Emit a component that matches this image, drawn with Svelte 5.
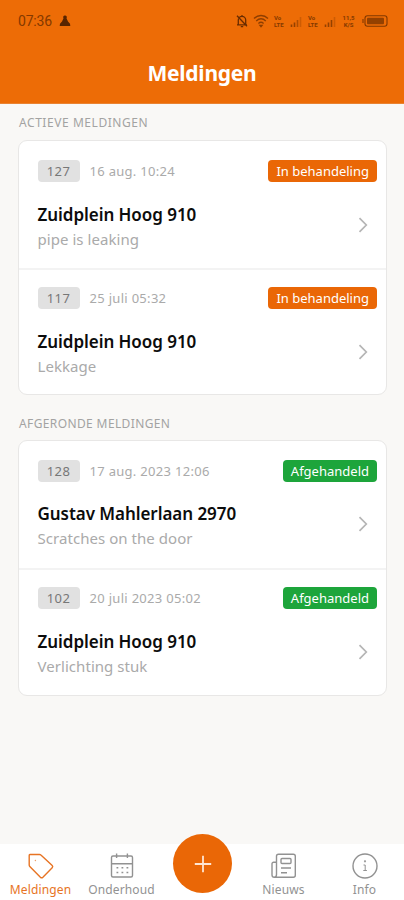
<script>
  const sections = [
    {
      title: 'ACTIEVE MELDINGEN',
      status: 'In behandeling',
      kind: 'open',
      items: [
        { id: '127', date: '16 aug. 10:24', address: 'Zuidplein Hoog 910', note: 'pipe is leaking' },
        { id: '117', date: '25 juli 05:32', address: 'Zuidplein Hoog 910', note: 'Lekkage' }
      ]
    },
    {
      title: 'AFGERONDE MELDINGEN',
      status: 'Afgehandeld',
      kind: 'done',
      items: [
        { id: '128', date: '17 aug. 2023 12:06', address: 'Gustav Mahlerlaan 2970', note: 'Scratches on the door' },
        { id: '102', date: '20 juli 2023 05:02', address: 'Zuidplein Hoog 910', note: 'Verlichting stuk' }
      ]
    }
  ];
</script>

{#snippet signal(strong)}
  <svg class="signal" width="13" height="12" viewBox="0 0 13 12">
    <path d="M1.500 12V9.500M4.500 12V7.500" />
    <path d="M7.500 12V5" opacity={strong ? 1 : 0.7} />
    <path d="M10.500 12V2" opacity="0.35" />
  </svg>
{/snippet}

<div class="screen">
  <header>
    <div class="status">
      <span class="time">07:36</span>
      <svg class="pawn" width="12" height="12" viewBox="0 0 12 12">
        <path d="M6 .5a1.700 1.700 0 0 1 1.500 2.700L9 6.500l2 2.200.3 2.300H.7L1 8.700l2-2.200 1.500-3.300A1.700 1.700 0 0 1 6 .5Z" />
      </svg>
      <div class="tray">
        <svg width="12" height="14" viewBox="0 0 12 14" class="line">
          <path d="M2.300 10.500V6a3.700 3.700 0 0 1 7.400 0v4.500M1 10.800h10M4.800 12.600h2.400M6 1v1.500M1 1.800l10 10.400" />
        </svg>
        <svg width="16" height="14" viewBox="0 0 16 14" class="line wifi">
          <path d="M1 4.500c4-4 10-4 14 0M3.200 7c3-2.800 6.600-2.800 9.600 0M5.400 9.400c1.700-1.500 3.500-1.500 5.200 0" />
          <path d="M7 11.500h2l-1 1.200Z" />
        </svg>
        <span class="tiny">Vo<br />LTE</span>
        {@render signal(false)}
        <span class="tiny">Vo<br />LTE</span>
        {@render signal(true)}
        <span class="tiny rate">11,5<br />K/S</span>
        <svg width="26" height="12" viewBox="0 0 26 12" class="battery">
          <rect x="3" y=".8" width="22" height="10.400" rx="2.500" fill="none" />
          <path d="M1 4v4" fill="none" />
          <rect class="fill" x="5" y="2.800" width="17" height="6.400" rx="1" />
        </svg>
      </div>
    </div>
    <h1>Meldingen</h1>
  </header>

  <main>
    {#each sections as section}
      <section>
        <h2 class={section.kind === 'open' ? 'wide' : ''}>{section.title}</h2>
        <div class="card">
          {#each section.items as item}
            <article>
              <div class="meta">
                <span class="id">{item.id}</span>
                <span class="date">{item.date}</span>
                <span class="tag {section.kind}">{section.status}</span>
              </div>
              <div class="body">
                <div>
                  <h3>{item.address}</h3>
                  <p>{item.note}</p>
                </div>
                <svg class="chevron" width="10" height="16" viewBox="0 0 10 16"><path d="M1.500 1.200 8.300 8l-6.800 6.800" /></svg>
              </div>
            </article>
          {/each}
        </div>
      </section>
    {/each}
  </main>

  <nav>
    <div class="tab active">
      <svg width="28" height="28" viewBox="0 0 28 28">
        <path d="M3 2.500h9.500a2 2 0 0 1 1.400.6l11.300 10.500a1.500 1.500 0 0 1 0 2.100l-9.300 9.500a1.800 1.800 0 0 1-2.500 0L2.800 14.500A2 2 0 0 1 2.200 13V3.500a1 1 0 0 1 .8-1Z" />
        <circle cx="8.300" cy="8.500" r=".3" stroke-width=".8" />
      </svg>
      <span>Meldingen</span>
    </div>
    <div class="tab">
      <svg width="28" height="28" viewBox="0 0 28 28">
        <rect x="3.500" y="4" width="21" height="21" rx="1.500" />
        <path d="M3.500 11.700h21M8.600 1.500V6M19.400 1.500V6" />
        <path stroke-dasharray="1.800 3.200" d="M8.500 15.800h12M8.500 20.500h12" />
      </svg>
      <span>Onderhoud</span>
    </div>
    <div class="tab middle">
      <div class="add">
        <svg width="18" height="18" viewBox="0 0 18 18"><path d="M9 .8v16.400M.8 9h16.400" /></svg>
      </div>
    </div>
    <div class="tab">
      <svg width="28" height="28" viewBox="0 0 28 28">
        <path d="M6.500 22.500V4.200a2 2 0 0 1 2-2h14.800a2 2 0 0 1 2 2v19a2 2 0 0 1-2 2H4.300a2.300 2.300 0 0 1-2.300-2.300V11.800a1.500 1.500 0 0 1 1.500-1.500h3M6.500 22.500c0 1.600-1 2.700-2.300 2.700" />
        <rect x="11" y="6.500" width="10" height="5" rx="1" />
        <path d="M11 16h10M11 20.800h6" />
      </svg>
      <span>Nieuws</span>
    </div>
    <div class="tab">
      <svg width="28" height="28" viewBox="0 0 28 28">
        <circle cx="14" cy="14" r="12" />
        <path d="M12.500 13h1.700v5.500M12.300 18.500h3.600" stroke-width="1" />
        <circle cx="14" cy="9.300" r=".4" />
      </svg>
      <span>Info</span>
    </div>
  </nav>
</div>

<style>
  :global(body) { margin: 0; }
  * { box-sizing: border-box; }
  svg { display: block; flex: none; }
  h1, h2, h3, p { margin: 0; white-space: nowrap; }

  .screen {
    width: 404px;
    height: 900px;
    display: flex;
    flex-direction: column;
    background: #f9f8f6;
    font-family: 'Noto Sans', sans-serif;
    overflow: hidden;
  }
  header {
    height: 104px;
    flex: none;
    background: #ed6c06;
    border-bottom: 1px solid #e98332;
  }
  .status {
    height: 42px;
    display: flex;
    align-items: center;
    padding: 0 16px 0 18px;
    color: #843900;
  }
  .time { width: 41px; font: 14px Roboto, sans-serif; letter-spacing: -0.2px; }
  .pawn { fill: #592500; }
  .tray {
    margin-left: auto;
    display: flex;
    align-items: center;
    gap: 5px;
  }
  .line { fill: none; stroke: #692c00; stroke-width: 1.3; }
  .wifi { stroke: #8e3e00; }
  .tiny { width: 11px; font: 700 6px/7px Roboto, sans-serif; color: #843900; }
  .rate { width: 13px; margin-right: 2px; text-align: center; }
  .signal { stroke: #944100; stroke-width: 1.6; }
  .battery { stroke: #813800; stroke-width: 1.1; }
  .battery .fill { fill: #843900; opacity: 0.85; stroke: none; }
  h1 {
    height: 62px;
    color: #fff;
    text-align: center;
    font-size: 21px;
    line-height: 63px;
    font-weight: 700;
    letter-spacing: -0.25px;
  }
  main { flex: 1; padding: 0 17px 0 18px; }
  section { height: 300.5px; }
  h2 {
    height: 36px;
    padding-left: 1px;
    font-size: 12px;
    line-height: 37px;
    font-weight: 400;
    letter-spacing: 0.38px;
    color: #a3a3a2;
  }
  .wide { letter-spacing: 0.56px; }
  .card {
    height: 255px;
    background: #fff;
    border: 1.500px solid #e8e7e6;
    border-radius: 9px;
  }
  section + section h2 { height: 35.5px; }
  section + section .card { height: 255.5px; }
  article { height: 126.500px; padding: 19px 9px 0 18.500px; }
  section + section article:first-child { padding-top: 18.500px; }
  article + article { border-top: 2px solid #f3f3f3; padding-top: 17.500px; }
  .meta { display: flex; align-items: center; height: 22px; }
  .id {
    width: 42px;
    height: 22px;
    border-radius: 4px;
    background: #e1e1e1;
    color: #777;
    text-align: center;
    font-size: 13px;
    line-height: 22px;
    letter-spacing: 0.4px;
  }
  .date { margin-left: 10px; font-size: 13px; color: #aaa; letter-spacing: 0.3px; }
  .tag {
    margin-left: auto;
    height: 22px;
    padding: 0 8px;
    border-radius: 4px;
    color: #fff;
    font-size: 13px;
    line-height: 22px;
  }
  .open { background: #ea6706; }
  .done { background: #1da53b; }
  .body {
    display: flex;
    align-items: flex-start;
    justify-content: space-between;
    padding-right: 9px;
    margin-top: 20.500px;
  }
  h3 { font: 600 17px/24px 'Noto Sans', sans-serif; color: #0c0c0c; letter-spacing: -0.05px; }
  p { font-size: 15px; line-height: 24px; color: #aaa; letter-spacing: 0.05px; }
  .chevron { margin-top: 14px; fill: none; stroke: #b5b5b5; stroke-width: 1.7; }

  nav {
    height: 56px;
    flex: none;
    display: flex;
    background: #fff;
  }
  .tab {
    width: 81px;
    flex: none;
    display: flex;
    flex-direction: column;
    align-items: center;
    padding-top: 8px;
    color: #929292;
    font-size: 12px;
    line-height: 17px;
    letter-spacing: 0.15px;
  }
  .tab span { margin-top: 1px; }
  .tab > svg { fill: none; stroke: currentColor; stroke-width: 1.4; }
  .active { color: #e77424; }
  .middle { padding: 0; }
  .add {
    width: 59px;
    height: 59px;
    margin-top: -10px;
    flex: none;
    display: flex;
    align-items: center;
    justify-content: center;
    border-radius: 50%;
    background: #ea6706;
  }
  .add svg { stroke: #ffe5d2; stroke-width: 1.8; }
</style>
